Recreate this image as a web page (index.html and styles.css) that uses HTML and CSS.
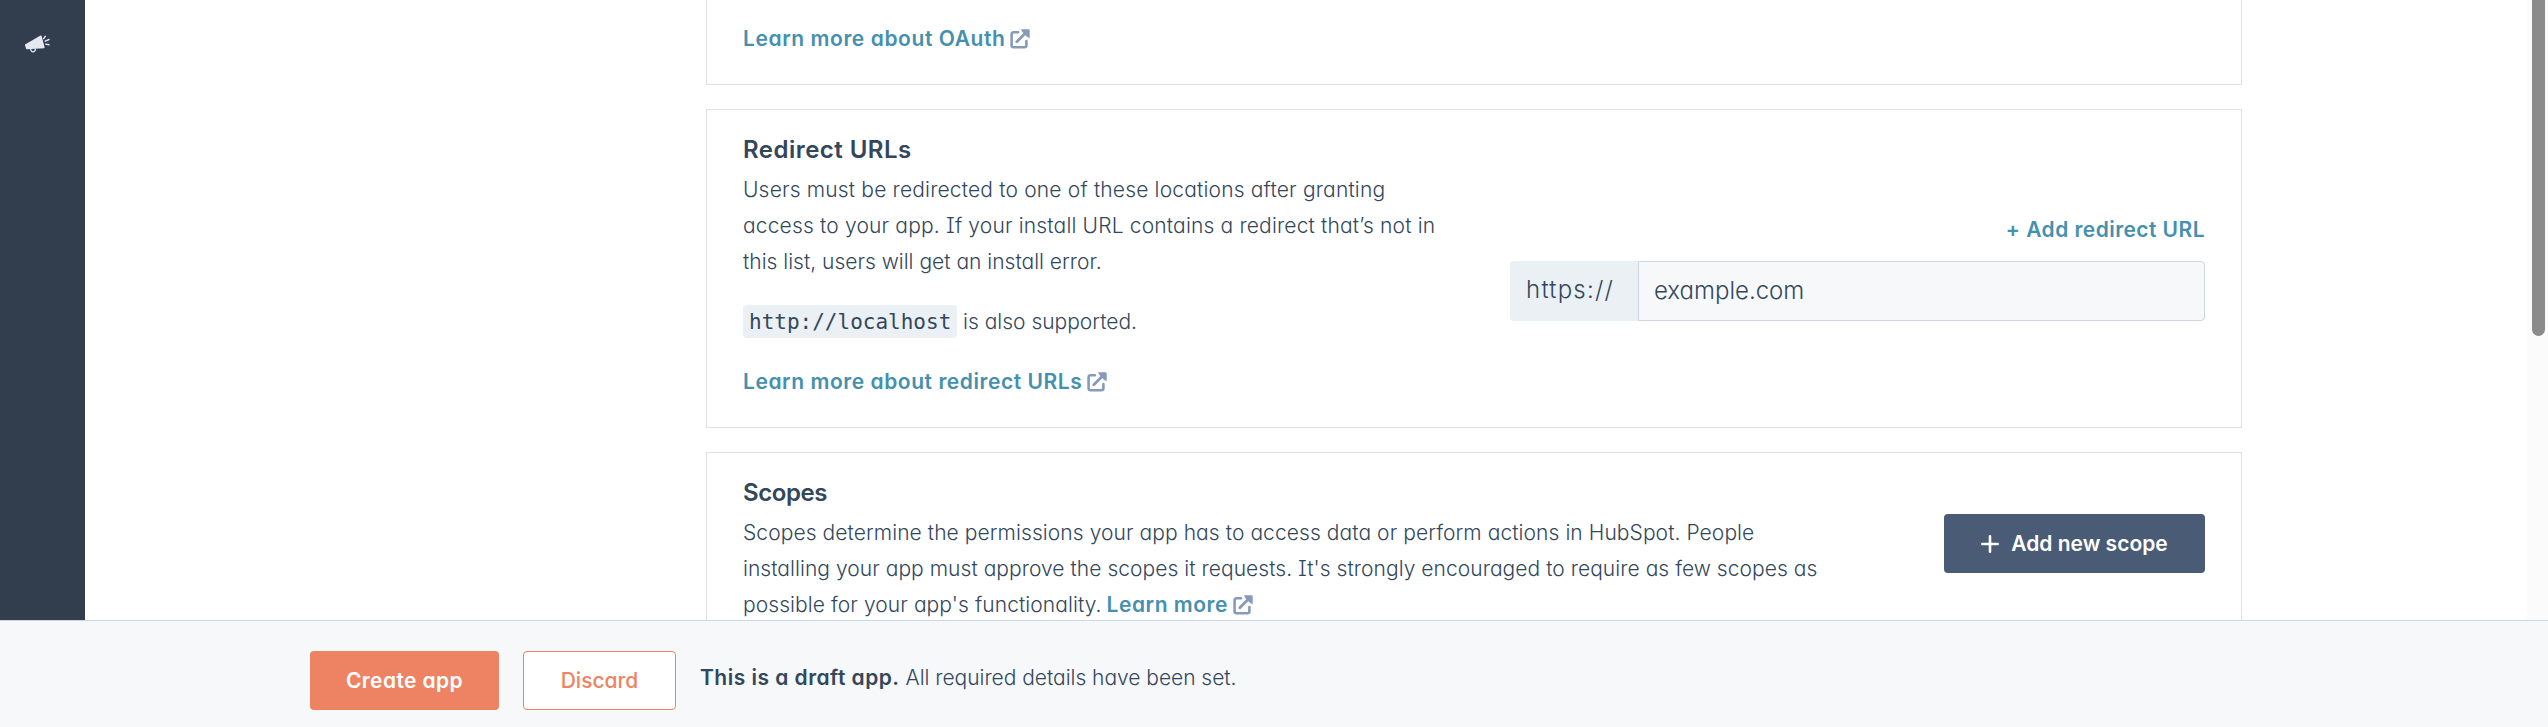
FILE: index.html
```html
<!DOCTYPE html>
<html lang="en">
<head>
<meta charset="utf-8">
<title>Create app</title>
<link rel="stylesheet" href="styles.css">
</head>
<body>
<svg width="0" height="0" class="defs">
  <symbol id="external" viewBox="0 0 20 20">
    <path d="M8 3.2H3.600a2 2 0 0 0-2 2v11a2 2 0 0 0 2 2h10.800a2 2 0 0 0 2-2V12" fill="none" stroke="currentColor" stroke-width="2.600" stroke-linecap="round"/>
    <path d="M6.800 12.800 16.500 3" fill="none" stroke="currentColor" stroke-width="2.800" stroke-linecap="round"/>
    <path d="M11 .3h7.700a1 1 0 0 1 1 1V9.300l-2.800-1.600L12.400 3z" fill="currentColor"/>
  </symbol>
</svg>
<div class="workspace">
  <nav class="sidebar">
    <svg class="megaphone" width="25" height="18" viewBox="0 0 25 18">
      <path d="M0 9.400 15.500.6q.9-.4 1.200.6l2.900 11.100q.2.900-.7 1L2 14.300q-.8 0-1-.8L0 10.200z" fill="#e4e8f0"/>
      <path d="M5.600 14q.5 3 2.700 2.800 2.200-.3 2.100-3" fill="none" stroke="#e4e8f0" stroke-width="1.300"/>
      <path d="M18.600 3.600l1.800-2.300M20.200 6.200l3.800-1.700M20.700 9.100l3.300.6" stroke="#e4e8f0" stroke-width="1.400" stroke-linecap="round"/>
    </svg>
  </nav>
  <main class="content">
    <section class="card card-oauth">
      <div><a class="link ls-oauth">Learn more about OAuth</a><svg class="ext"><use href="#external"/></svg></div>
    </section>
    <section class="card card-redirect">
      <div class="copy">
        <h2 class="ls-redirect">Redirect URLs</h2>
        <p><span class="ls-r1">Users must be redirected to one of these locations after granting</span><br><span class="ls-r2">access to your app. If your install URL contains a redirect that’s not in</span><br><span class="ls-r3">this list, users will get an install error.</span></p>
        <p><code>http://localhost</code><span class="ls-r4">is also supported.</span></p>
        <p><a class="link ls-rlink">Learn more about redirect URLs</a><svg class="ext"><use href="#external"/></svg></p>
      </div>
      <div class="fields">
        <a class="link add-url">+ Add redirect URL</a>
        <div class="url-input"><span class="prefix"><span class="ls-https">https://</span></span><span class="value">example.com</span></div>
      </div>
    </section>
    <section class="card card-scopes">
      <div class="copy">
        <h2 class="ls-scopes">Scopes</h2>
        <p><span class="ls-s1">Scopes determine the permissions your app has to access data or perform actions in HubSpot. People</span><br><span class="ls-s2">installing your app must approve the scopes it requests. It's strongly encouraged to require as few scopes as</span><br><span class="ls-s3">possible for your app's functionality.</span><a class="link ls-more">Learn more</a><svg class="ext"><use href="#external"/></svg></p>
      </div>
      <button class="btn btn-scope"><svg width="18" height="18" viewBox="0 0 18 18"><path d="M9 1.300v15.400M1.300 9h15.400" stroke="#fff" stroke-width="2.600" stroke-linecap="round"/></svg><span>Add new scope</span></button>
    </section>
  </main>
  <div class="scrollbar"><div class="thumb"></div></div>
</div>
<footer class="footer">
  <button class="btn btn-create">Create app</button>
  <button class="btn btn-discard">Discard</button>
  <div class="status"><b class="ls-draft">This is a draft app.</b><span class="ls-set">All required details have been set.</span></div>
</footer>
</body>
</html>
```
FILE: styles.css
```css
* { box-sizing: border-box; }
body {
  margin: 0;
  width: 2548px;
  height: 727px;
  overflow: hidden;
  display: flex;
  flex-direction: column;
  background: #fff;
  color: #33475b;
  font: 300 21px/36px "Inter", sans-serif;
  font-feature-settings: "cv11", "cv08";
  white-space: nowrap;
}
.defs { position: absolute; }
.workspace { height: 620px; display: flex; overflow: hidden; }
.sidebar { width: 85px; flex: none; background: #323d4e; padding: 35px 0 0 25px; }
.megaphone { display: block; }
.content { flex: 1; display: flex; flex-direction: column; gap: 24px; padding-left: 621px; }
.card { width: 1536px; flex: none; border: 1px solid #dfe1ea; padding: 22px 36px 27px; display: flex; }
.card-oauth { height: 85px; border-top: 0; padding-top: 21px; }
.card-redirect { height: 319px; justify-content: space-between; }
.card-scopes { justify-content: space-between; }
h2 { margin: 0 0 4px; font-size: 24px; line-height: 36px; font-weight: 600; }
p { margin: 0 0 24px; }
.link { color: #4590ae; font-weight: 600; }
.ext { width: 20px; height: 20px; margin-left: 5px; color: #869bbb; vertical-align: -3px; }
code {
  display: inline-block;
  width: 214px;
  height: 33px;
  line-height: 35px;
  padding-left: 6px;
  margin-right: 6px;
  border-radius: 4px;
  background: #eaf0f4;
  font-family: "DejaVu Sans Mono", monospace;
  font-size: 21px;
  font-weight: 400;
}
.fields { width: 695px; padding-top: 80px; display: flex; flex-direction: column; align-items: flex-end; }
.add-url { letter-spacing: .45px; margin-bottom: 13px; }
.url-input { width: 695px; height: 60px; display: flex; font-size: 24px; line-height: 58px; }
.prefix { width: 128px; background: #eaf0f4; padding-left: 16px; border-radius: 4px 0 0 4px; }
.value { flex: 1; border: 1px solid #cbd6e2; border-radius: 0 4px 4px 0; background: #f6f8fa; padding-left: 15px; }
.btn {
  height: 59px;
  display: flex;
  align-items: center;
  justify-content: center;
  border: 0;
  border-radius: 4px;
  padding: 0;
  font: 600 21px/36px "Inter", sans-serif;
  font-feature-settings: "cv11", "cv08";
  color: #fff;
}
.btn-scope { width: 261px; margin-top: 39px; gap: 12px; background: #495b75; }
.footer { height: 107px; border-top: 1px solid #cbd6e2; background: #f6f8fa; display: flex; align-items: flex-start; padding: 30px 0 0 310px; }
.btn-create { width: 189px; background: #ed8363; letter-spacing: .4px; }
.btn-discard { width: 153px; margin-left: 24px; background: #fff; border: 1px solid #ed8363; color: #ed8363; font-weight: 500; }
.status { margin: 9px 0 0 24px; }
.status b { font-weight: 600; margin-right: 6px; }
.scrollbar { width: 21px; background: #fbfbfb; padding-left: 5px; }
.thumb { width: 13px; height: 336px; border-radius: 0 0 7px 7px; background: #8b8b8b; }
.ls-oauth { letter-spacing: .58px; }
.ls-redirect { letter-spacing: .47px; }
.ls-r1 { letter-spacing: .17px; }
.ls-r2 { letter-spacing: .165px; }
.ls-rlink { letter-spacing: .56px; }
.ls-https { letter-spacing: 1.25px; }
.ls-scopes { letter-spacing: -.4px; }
.ls-s1 { letter-spacing: .075px; }
.ls-s2 { letter-spacing: .045px; }
.ls-s3 { letter-spacing: .08px; margin-right: 5px; }
.ls-more { letter-spacing: .53px; }
.ls-draft { letter-spacing: .48px; }
.ls-set { letter-spacing: -.03px; }
```
